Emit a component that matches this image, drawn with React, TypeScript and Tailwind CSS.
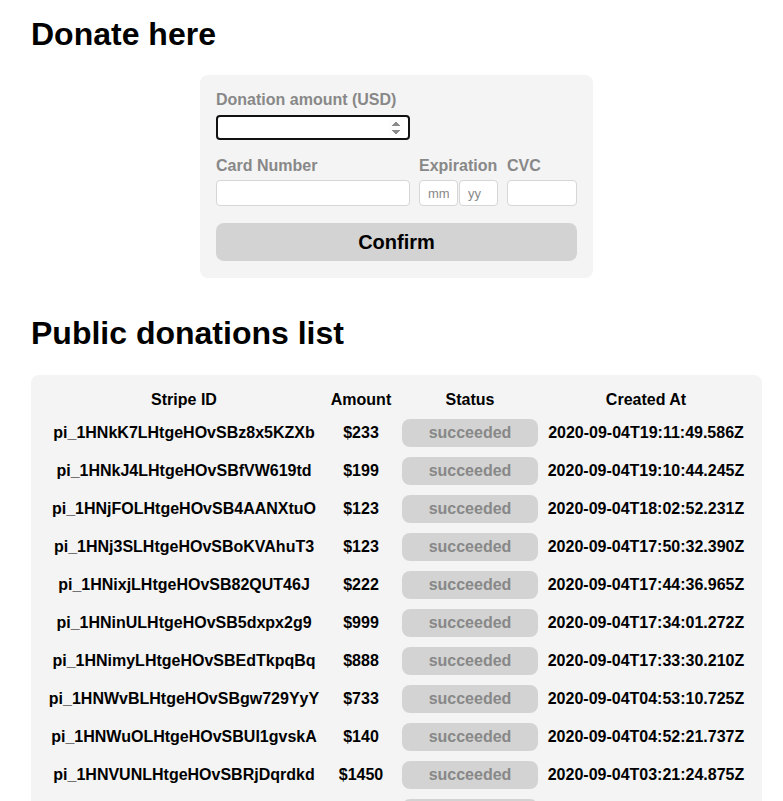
import React from 'react'

type Donation = {
    id: string
    amount: number
    status: string
    createdAt: string
}

const DONATIONS: Donation[] = [
    { id: 'pi_1HNkK7LHtgeHOvSBz8x5KZXb', amount: 233, status: 'succeeded', createdAt: '2020-09-04T19:11:49.586Z' },
    { id: 'pi_1HNkJ4LHtgeHOvSBfVW619td', amount: 199, status: 'succeeded', createdAt: '2020-09-04T19:10:44.245Z' },
    { id: 'pi_1HNjFOLHtgeHOvSB4AANXtuO', amount: 123, status: 'succeeded', createdAt: '2020-09-04T18:02:52.231Z' },
    { id: 'pi_1HNj3SLHtgeHOvSBoKVAhuT3', amount: 123, status: 'succeeded', createdAt: '2020-09-04T17:50:32.390Z' },
    { id: 'pi_1HNixjLHtgeHOvSB82QUT46J', amount: 222, status: 'succeeded', createdAt: '2020-09-04T17:44:36.965Z' },
    { id: 'pi_1HNinULHtgeHOvSB5dxpx2g9', amount: 999, status: 'succeeded', createdAt: '2020-09-04T17:34:01.272Z' },
    { id: 'pi_1HNimyLHtgeHOvSBEdTkpqBq', amount: 888, status: 'succeeded', createdAt: '2020-09-04T17:33:30.210Z' },
    { id: 'pi_1HNWvBLHtgeHOvSBgw729YyY', amount: 733, status: 'succeeded', createdAt: '2020-09-04T04:53:10.725Z' },
    { id: 'pi_1HNWuOLHtgeHOvSBUI1gvskA', amount: 140, status: 'succeeded', createdAt: '2020-09-04T04:52:21.737Z' },
    { id: 'pi_1HNVUNLHtgeHOvSBRjDqrdkd', amount: 1450, status: 'succeeded', createdAt: '2020-09-04T03:21:24.875Z' },
    { id: 'pi_1HNVTmLHtgeHOvSBxQ2k8aPe', amount: 50, status: 'succeeded', createdAt: '2020-09-04T03:20:41.118Z' },
]

const DonateForm: React.FC = () => {
    return (
        <div className="mx-auto w-[393px] rounded-lg bg-[#f4f4f4] px-4 pt-4 pb-[17px]">
            <label className="block text-base font-bold leading-[18px] text-[#888]">
                Donation amount (USD)
            </label>
            <input
                type="number"
                autoFocus
                className="mt-[6px] block h-[25px] w-[194px] rounded-[4px] border-2 border-[#111] bg-white px-1 text-sm outline-none"
            />
            <div className="mt-[17px] flex">
                <div className="flex w-[203px] flex-col">
                    <label className="text-base font-bold leading-[18px] text-[#888]">Card Number</label>
                    <input
                        type="text"
                        className="mt-[5px] h-[26px] w-[194px] rounded-[4px] border border-[#d6d6d6] bg-white px-1 text-sm outline-none"
                    />
                </div>
                <div className="flex w-[88px] flex-col">
                    <label className="text-base font-bold leading-[18px] text-[#888]">Expiration</label>
                    <div className="mt-[5px] flex gap-px">
                        <input
                            type="text"
                            placeholder="mm"
                            className="h-[26px] w-[39px] rounded-[4px] border border-[#d6d6d6] bg-white px-2 text-[13px] outline-none placeholder:text-[#888]"
                        />
                        <input
                            type="text"
                            placeholder="yy"
                            className="h-[26px] w-[39px] rounded-[4px] border border-[#d6d6d6] bg-white px-2 text-[13px] outline-none placeholder:text-[#888]"
                        />
                    </div>
                </div>
                <div className="flex flex-col">
                    <label className="text-base font-bold leading-[18px] text-[#888]">CVC</label>
                    <input
                        type="text"
                        className="mt-[5px] h-[26px] w-[70px] rounded-[4px] border border-[#d6d6d6] bg-white px-1 text-sm outline-none"
                    />
                </div>
            </div>
            <button
                type="button"
                className="mt-[17px] h-[38px] w-full rounded-lg bg-[#d3d3d3] text-[20px] font-bold text-black"
            >
                Confirm
            </button>
        </div>
    )
}

const DonationsTable: React.FC = () => {
    return (
        <div className="mt-[23px] rounded-lg bg-[#f4f4f4] pt-4 pb-4 pl-[14px]">
            <div className="grid grid-cols-[278px_76px_142px_210px] text-center text-base font-bold leading-[18px] text-black">
                <div>Stripe ID</div>
                <div>Amount</div>
                <div>Status</div>
                <div>Created At</div>
            </div>
            <div className="mt-[10px] flex flex-col gap-[10px]">
                {DONATIONS.map((d) => (
                    <div
                        key={d.id}
                        className="grid h-[28px] grid-cols-[278px_76px_142px_210px] items-center text-center text-base font-bold text-black"
                    >
                        <div>{d.id}</div>
                        <div>${d.amount}</div>
                        <div className="px-[3px]">
                            <div className="flex h-[28px] items-center justify-center rounded-lg bg-[#d3d3d3] text-[#888]">
                                {d.status}
                            </div>
                        </div>
                        <div>{d.createdAt}</div>
                    </div>
                ))}
            </div>
        </div>
    )
}

export default function App() {
    return (
        <div className="min-h-screen bg-white pl-[31px] pr-[21px] font-['Liberation_Sans',Arial,sans-serif]">
            <h1 className="pt-[16px] text-[32px] font-bold leading-[37px] text-black">Donate here</h1>
            <div className="mt-[22px]">
                <DonateForm />
            </div>
            <h1 className="mt-[37px] text-[32px] font-bold leading-[37px] text-black">Public donations list</h1>
            <DonationsTable />
        </div>
    )
}
